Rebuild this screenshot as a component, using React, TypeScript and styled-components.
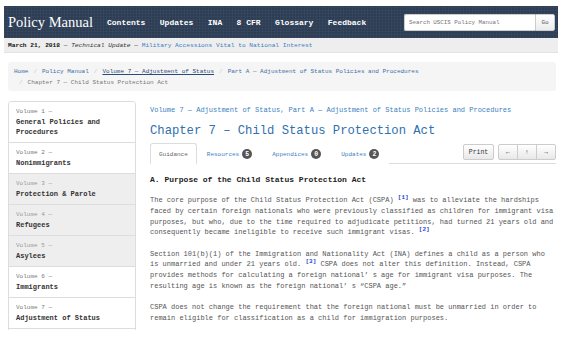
import React from 'react';
import styled, { createGlobalStyle } from 'styled-components'

const GlobalStyle = createGlobalStyle`
  html, body {
    margin: 0;
    padding: 0;
    background: #ffffff;
  }
  body {
    font-family: "Liberation Mono", "DejaVu Sans Mono", monospace;
    color: #555;
  }
`

const navItems = ['Contents', 'Updates', 'INA', '8 CFR', 'Glossary', 'Feedback']

const volumes = [
  { label: 'Volume 1 —', name: ['General Policies and', 'Procedures'], muted: false },
  { label: 'Volume 2 —', name: ['Nonimmigrants'], muted: false },
  { label: 'Volume 3 —', name: ['Protection & Parole'], muted: true },
  { label: 'Volume 4 —', name: ['Refugees'], muted: true },
  { label: 'Volume 5 —', name: ['Asylees'], muted: true },
  { label: 'Volume 6 —', name: ['Immigrants'], muted: false },
  { label: 'Volume 7 —', name: ['Adjustment of Status'], muted: false },
]

const tabs = [
  { title: 'Guidance', count: null },
  { title: 'Resources', count: 5 },
  { title: 'Appendices', count: 0 },
  { title: 'Updates', count: 2 },
]

const App = () => {
  return (
    <Page>
      <GlobalStyle />
      <Header>
        <Brand>Policy Manual</Brand>
        <Nav>
          {navItems.map(item => <NavItem key={item}>{item}</NavItem>)}
        </Nav>
        <Search>
          <SearchInput placeholder="Search USCIS Policy Manual" />
          <SearchButton>Go</SearchButton>
        </Search>
      </Header>

      <DateBar>
        <b>March 21, 2018</b>&nbsp;—&nbsp;<i>Technical Update</i>&nbsp;—&nbsp;
        <DateLink>Military Accessions Vital to National Interest</DateLink>
      </DateBar>

      <Content>
        <Breadcrumb>
          <CrumbLink>Home</CrumbLink>
          <Sep>/</Sep>
          <CrumbLink>Policy Manual</CrumbLink>
          <Sep>/</Sep>
          <CrumbLink $active>Volume 7 — Adjustment of Status</CrumbLink>
          <Sep>/</Sep>
          <CrumbLink>Part A — Adjustment of Status Policies and Procedures</CrumbLink>
          <br />
          <Sep>/</Sep>
          <CrumbCurrent>Chapter 7 — Child Status Protection Act</CrumbCurrent>
        </Breadcrumb>

        <Columns>
          <Sidebar>
            {volumes.map(vol => (
              <VolumeItem key={vol.label} $muted={vol.muted}>
                <VolumeLabel $muted={vol.muted}>{vol.label}</VolumeLabel>
                {vol.name.map(line => <VolumeName key={line}>{line}</VolumeName>)}
              </VolumeItem>
            ))}
            <VolumeItem $muted={false} />
          </Sidebar>

          <Main>
            <Subtitle>Volume 7 — Adjustment of Status, Part A — Adjustment of Status Policies and Procedures</Subtitle>
            <Title>Chapter 7 – Child Status Protection Act</Title>

            <TabRow>
              {tabs.map((tab, index) => (
                <Tab key={tab.title} $active={index === 0}>
                  {tab.title}
                  {tab.count !== null && <Badge>{tab.count}</Badge>}
                </Tab>
              ))}
              <Tools>
                <ToolButton $width={30}>Print</ToolButton>
                <ButtonGroup>
                  <ToolButton $width={19}>←</ToolButton>
                  <ToolButton $width={19}>↑</ToolButton>
                  <ToolButton $width={19}>→</ToolButton>
                </ButtonGroup>
              </Tools>
            </TabRow>

            <SectionTitle>A. Purpose of the Child Status Protection Act</SectionTitle>

            <Paragraph>
              The core purpose of the Child Status Protection Act (CSPA) <Ref>[1]</Ref> was to alleviate the hardships<br />
              faced by certain foreign nationals who were previously classified as children for immigrant visa<br />
              purposes, but who, due to the time required to adjudicate petitions, had turned 21 years old and<br />
              consequently became ineligible to receive such immigrant visas. <Ref>[2]</Ref>
            </Paragraph>

            <Paragraph>
              Section 101(b)(1) of the Immigration and Nationality Act (INA) defines a child as a person who<br />
              is unmarried and under 21 years old. <Ref>[3]</Ref> CSPA does not alter this definition. Instead, CSPA<br />
              provides methods for calculating a foreign national’ s age for immigrant visa purposes. The<br />
              resulting age is known as the foreign national’ s “CSPA age.”
            </Paragraph>

            <Paragraph>
              CSPA does not change the requirement that the foreign national must be unmarried in order to<br />
              remain eligible for classification as a child for immigration purposes.
            </Paragraph>
          </Main>
        </Columns>
      </Content>
    </Page>
  );
};

const Page = styled.div`
  padding-top: 6px;
  height: 324px;
  overflow: hidden;
`

const Header = styled.div`
  display: flex;
  align-items: center;
  height: 32px;
  margin: 0 5px 0 4px;
  padding: 0 3px 0 4px;
  background-color: #2c3d55;
  background-image:
    repeating-linear-gradient(0deg, rgba(255,255,255,0.03) 0 1px, transparent 1px 3px),
    repeating-linear-gradient(90deg, rgba(255,255,255,0.03) 0 1px, transparent 1px 3px);
`

const Brand = styled.div`
  font-family: "Liberation Serif", "DejaVu Serif", serif;
  font-size: 14.5px;
  color: #ffffff;
  margin-right: 14px;
  white-space: nowrap;
`

const Nav = styled.div`
  display: flex;
  gap: 14.4px;
`

const NavItem = styled.span`
  font-size: 8px;
  font-weight: bold;
  color: #ffffff;
  white-space: nowrap;
`

const Search = styled.div`
  display: flex;
  margin-left: auto;
  height: 17px;
`

const SearchInput = styled.input`
  width: 131px;
  height: 17px;
  box-sizing: border-box;
  border: 1px solid #ccc;
  border-right: none;
  border-radius: 2px 0 0 2px;
  padding: 0 4px;
  font-family: "Liberation Mono", monospace;
  font-size: 5.8px;
  outline: none;
  ::placeholder {
    color: #999;
  }
`

const SearchButton = styled.button`
  width: 20px;
  height: 17px;
  padding: 0;
  border: 1px solid #ccc;
  border-radius: 0 2px 2px 0;
  background: linear-gradient(#ffffff, #ececec);
  font-family: "Liberation Mono", monospace;
  font-size: 6px;
  color: #555;
`

const DateBar = styled.div`
  display: flex;
  align-items: center;
  height: 14px;
  margin: 0 5px 0 4px;
  padding-left: 4px;
  background: #eeeeee;
  border-bottom: 1px solid #e2e2e2;
  font-size: 6.2px;
  color: #333;
  white-space: nowrap;
  b {
    color: #111;
  }
`

const DateLink = styled.span`
  color: #3a7fc1;
`

const Content = styled.div`
  padding: 9px 7px 0 8px;
`

const Breadcrumb = styled.div`
  background: #f5f5f5;
  border-radius: 3px;
  padding: 4px 6px 3px 6px;
  font-size: 6px;
  line-height: 11px;
  white-space: nowrap;
`

const CrumbLink = styled.span<{ $active?: boolean }>`
  color: ${p => p.$active ? '#2a4a7a' : '#3a6fa5'};
  text-decoration: ${p => p.$active ? 'underline' : 'none'};
`

const Sep = styled.span`
  color: #c8c8c8;
  padding: 0 5px;
`

const CrumbCurrent = styled.span`
  color: #777;
`

const Columns = styled.div`
  display: flex;
  gap: 14px;
  margin-top: 10px;
`

const Sidebar = styled.div`
  flex: 0 0 126px;
  border: 1px solid #dddddd;
  border-radius: 3px;
  overflow: hidden;
`

const VolumeItem = styled.div<{ $muted: boolean }>`
  min-height: 20px;
  padding: 5px 7px;
  line-height: 10px;
  background: ${p => p.$muted ? '#eeeeee' : '#ffffff'};
  border-bottom: 1px solid #dddddd;
`

const VolumeLabel = styled.div<{ $muted: boolean }>`
  font-size: 6px;
  color: ${p => p.$muted ? '#999' : '#777'};
`

const VolumeName = styled.div`
  font-size: 7px;
  font-weight: bold;
  color: #333;
  white-space: nowrap;
`

const Main = styled.div`
  flex: 1;
  min-width: 0;
  padding-top: 4px;
`

const Subtitle = styled.div`
  font-size: 7px;
  line-height: 10px;
  color: #3a7fc1;
  white-space: nowrap;
`

const Title = styled.h1`
  margin: 7px 0 0 0;
  font-size: 12.2px;
  line-height: 18px;
  font-weight: normal;
  color: #2f70ae;
  white-space: nowrap;
`

const TabRow = styled.div`
  display: flex;
  align-items: stretch;
  height: 20px;
  margin-top: 3px;
  border-bottom: 1px solid #dddddd;
`

const Tab = styled.div<{ $active: boolean }>`
  display: flex;
  align-items: center;
  gap: 3px;
  padding: 0 ${p => p.$active ? 8 : 9}px;
  font-size: 6px;
  color: ${p => p.$active ? '#666' : '#3a7fc1'};
  background: #ffffff;
  border: 1px solid ${p => p.$active ? '#dddddd' : 'transparent'};
  border-bottom: none;
  border-radius: 3px 3px 0 0;
  margin-bottom: -1px;
  white-space: nowrap;
`

const Badge = styled.span`
  display: inline-flex;
  align-items: center;
  justify-content: center;
  width: 10px;
  height: 10px;
  border-radius: 50%;
  background: #555555;
  color: #ffffff;
  font-size: 6.5px;
  font-weight: bold;
`

const Tools = styled.div`
  display: flex;
  gap: 4px;
  margin-left: auto;
  padding-top: 1px;
`

const ButtonGroup = styled.div`
  display: flex;
  & > button {
    border-radius: 0;
    margin-left: -1px;
  }
  & > button:first-child {
    border-radius: 2px 0 0 2px;
    margin-left: 0;
  }
  & > button:last-child {
    border-radius: 0 2px 2px 0;
  }
`

const ToolButton = styled.button<{ $width: number }>`
  width: ${p => p.$width + 1}px;
  height: 16px;
  padding: 0;
  border: 1px solid #cccccc;
  border-radius: 2px;
  background: linear-gradient(#ffffff, #e8e8e8);
  font-family: "Liberation Mono", monospace;
  font-size: 6.5px;
  color: #333;
`

const SectionTitle = styled.h2`
  margin: 11px 0 0 0;
  font-size: 8px;
  line-height: 10px;
  font-weight: bold;
  color: #222;
  white-space: nowrap;
`

const Paragraph = styled.p`
  margin: 10.4px 0 0 0;
  font-size: 7px;
  line-height: 10.67px;
  color: #555;
  white-space: nowrap;
  & + & {
    margin-top: 10.67px;
  }
`

const Ref = styled.sup`
  font-size: 6px;
  line-height: 0;
  font-weight: bold;
  color: #1f3fd0;
  vertical-align: 3px;
`

export default App
